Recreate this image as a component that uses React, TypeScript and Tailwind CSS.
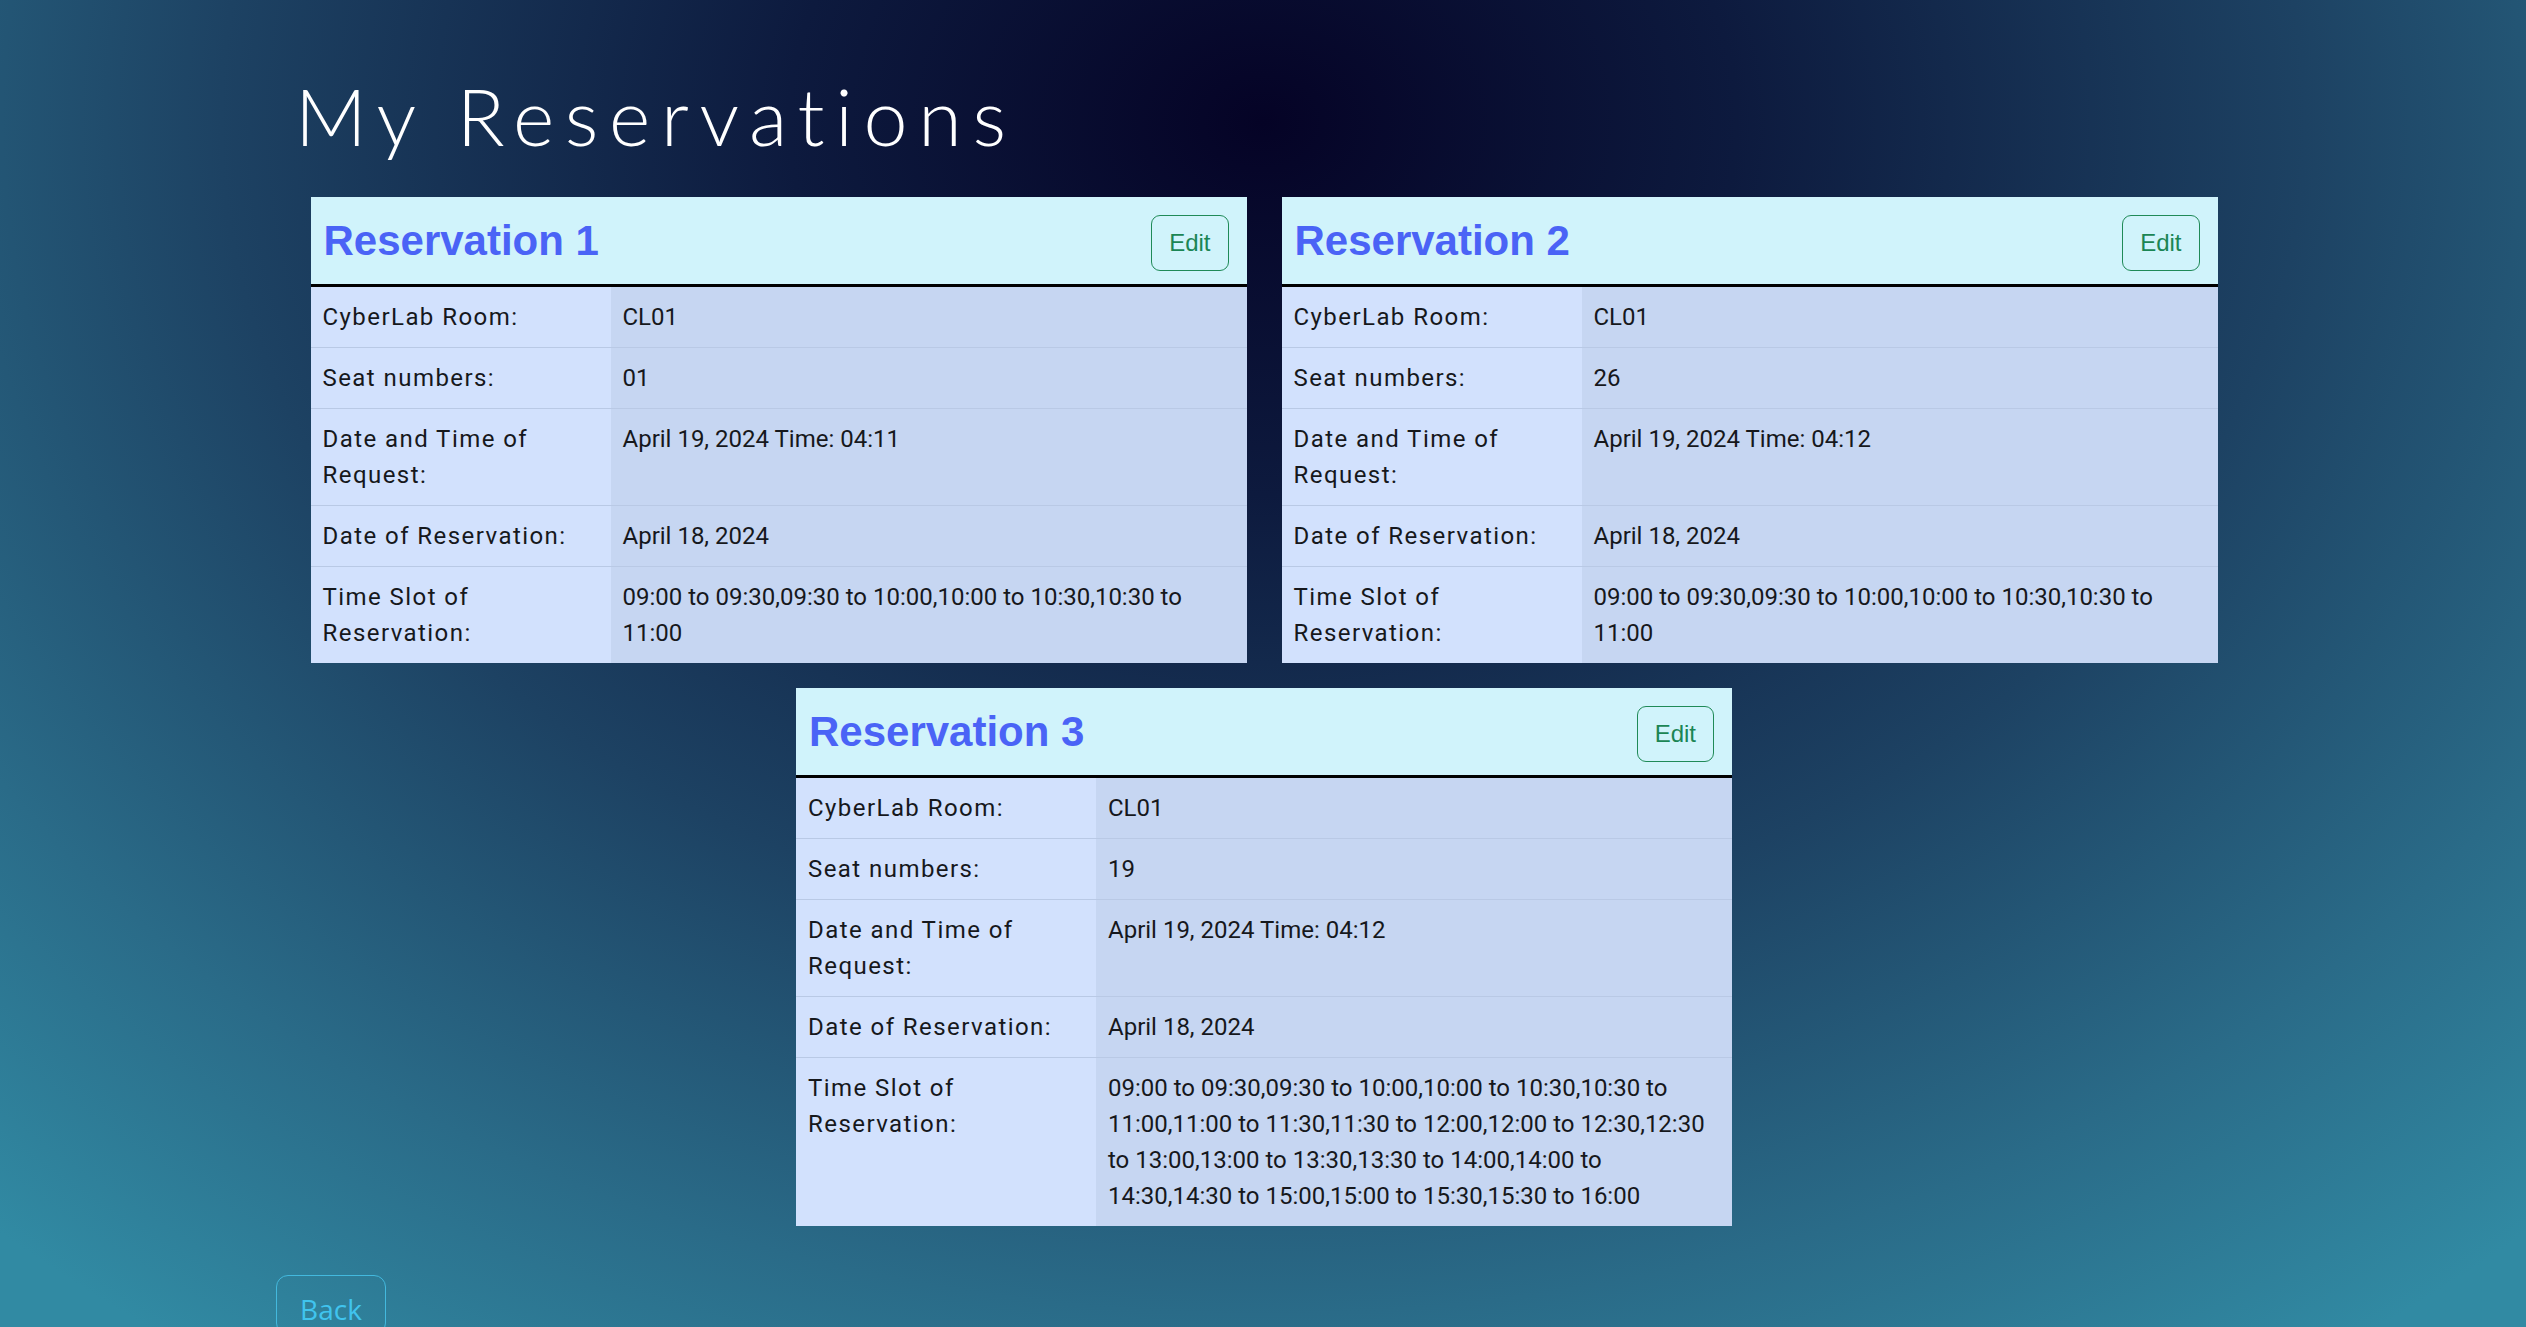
import type { ReactNode } from 'react'

interface Reservation {
  id: number
  room: string
  seat: string
  requested: string
  date: string
  slots: string
}

const RESERVATIONS: Reservation[] = [
  {
    id: 1,
    room: 'CL01',
    seat: '01',
    requested: 'April 19, 2024 Time: 04:11',
    date: 'April 18, 2024',
    slots: '09:00 to 09:30,09:30 to 10:00,10:00 to 10:30,10:30 to 11:00',
  },
  {
    id: 2,
    room: 'CL01',
    seat: '26',
    requested: 'April 19, 2024 Time: 04:12',
    date: 'April 18, 2024',
    slots: '09:00 to 09:30,09:30 to 10:00,10:00 to 10:30,10:30 to 11:00',
  },
  {
    id: 3,
    room: 'CL01',
    seat: '19',
    requested: 'April 19, 2024 Time: 04:12',
    date: 'April 18, 2024',
    slots:
      '09:00 to 09:30,09:30 to 10:00,10:00 to 10:30,10:30 to 11:00,11:00 to 11:30,11:30 to 12:00,12:00 to 12:30,12:30 to 13:00,13:00 to 13:30,13:30 to 14:00,14:00 to 14:30,14:30 to 15:00,15:00 to 15:30,15:30 to 16:00',
  },
]

function Row({ label, children, last }: { label: string; children: ReactNode; last?: boolean }) {
  return (
    <div className={last ? 'flex' : 'flex border-b border-[#b9c9e5]'}>
      <div className="w-[300px] shrink-0 bg-[#d2e1fd] px-[12px] py-[12px] tracking-[0.06em]">
        {label}
      </div>
      <div className="min-w-0 flex-1 bg-[#c6d6f2] px-[12px] py-[12px]">{children}</div>
    </div>
  )
}

function ReservationCard({ r }: { r: Reservation }) {
  return (
    <div className="w-[936px] text-[24px] leading-[36px] text-[#16181c]">
      <div className="flex h-[90px] items-center justify-between border-b-[3px] border-black bg-[#d0f3fb] px-[13px] pr-[18px]">
        <h3 className="font-['Liberation_Sans',Arial,sans-serif] text-[42px] font-bold leading-[50px] text-[#4a63f6]">
          Reservation {r.id}
        </h3>
        <button
          type="button"
          className="mt-[5px] h-[56px] rounded-[9px] border-[1.5px] border-[#1f8a57] px-[17px] font-['Liberation_Sans',Arial,sans-serif] text-[24px] leading-[36px] text-[#1b8554]"
        >
          Edit
        </button>
      </div>
      <Row label="CyberLab Room:">{r.room}</Row>
      <Row label="Seat numbers:">{r.seat}</Row>
      <Row label="Date and Time of Request:">{r.requested}</Row>
      <Row label="Date of Reservation:">{r.date}</Row>
      <Row label="Time Slot of Reservation:" last>
        {r.slots}
      </Row>
    </div>
  )
}

export default function App() {
  return (
    <div className="min-h-screen bg-[radial-gradient(ellipse_75%_110%_at_50%_9%,#050326_0%,#0d1a3e_25%,#1d4263_55%,#2a6b88_80%,#318aa3_100%)] font-['Roboto',sans-serif]">
      <h1 className="pl-[295px] pt-[70px] font-['Lato',sans-serif] text-[79px] font-light leading-[92px] tracking-[0.135em] text-white">
        My Reservations
      </h1>
      <div className="mt-[35px] flex flex-wrap justify-center gap-x-[35px] gap-y-[25px] pl-[2px]">
        {RESERVATIONS.map((r) => (
          <ReservationCard key={r.id} r={r} />
        ))}
      </div>
      <div className="pb-[20px] pl-[276px] pt-[49px]">
        <button
          type="button"
          className="h-[60px] w-[110px] rounded-[12px] border-[1.5px] border-[#43b9de] pt-[8px] font-['Open_Sans',sans-serif] text-[28px] text-[#40c4ee]"
        >
          Back
        </button>
      </div>
    </div>
  )
}
